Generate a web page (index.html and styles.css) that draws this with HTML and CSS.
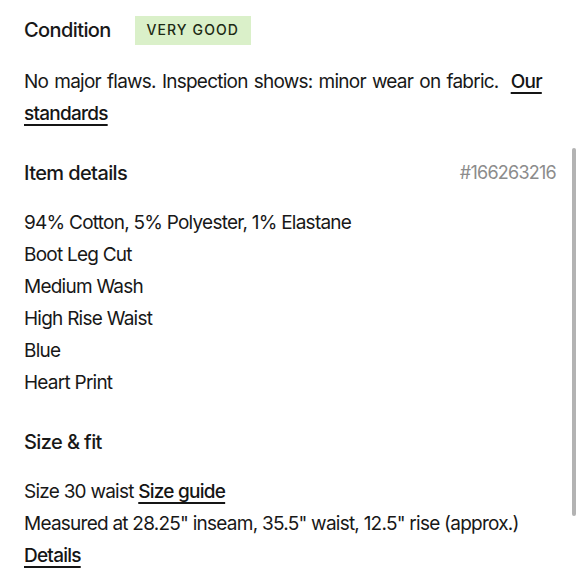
FILE: index.html
```html
<!DOCTYPE html>
<html>
<head>
<meta charset="utf-8">
<link rel="stylesheet" href="styles.css">
</head>
<body>
<main class="page">
  <section class="condition">
    <div class="condition-row">
      <h2 class="heading">Condition</h2>
      <span class="badge">VERY GOOD</span>
    </div>
    <p class="text">No major flaws. Inspection shows: minor wear on fabric.&nbsp; <a class="link" href="#">Our standards</a></p>
  </section>
  <section class="section">
    <div class="heading-row">
      <h2 class="heading">Item details</h2>
      <span class="item-id">#166263216</span>
    </div>
    <ul class="list">
      <li>94% Cotton, 5% Polyester, 1% Elastane</li>
      <li>Boot Leg Cut</li>
      <li>Medium Wash</li>
      <li>High Rise Waist</li>
      <li>Blue</li>
      <li>Heart Print</li>
    </ul>
  </section>
  <section class="section">
    <div class="heading-row">
      <h2 class="heading">Size &amp; fit</h2>
    </div>
    <div class="list">
      <div>Size 30 waist <a class="link" href="#">Size guide</a></div>
      <div>Measured at 28.25" inseam, 35.5" waist, 12.5" rise (approx.)</div>
      <div><a class="link" href="#">Details</a></div>
    </div>
  </section>
</main>
<div class="scrollbar"></div>
</body>
</html>
```
FILE: styles.css
```css
html, body {
  margin: 0;
  padding: 0;
  background: #fff;
}
body {
  font-family: Inter, "Noto Sans", sans-serif;
  color: #181818;
  font-size: 19px;
  line-height: 32px;
  letter-spacing: -0.04em;
  position: relative;
  width: 580px;
  height: 580px;
  overflow: hidden;
}
.page {
  padding: 15px 24px 0 24px;
}
.condition-row {
  display: flex;
  align-items: center;
  gap: 24px;
  height: 30px;
}
.heading {
  margin: 0;
  font-size: 20px;
  font-weight: 500;
  line-height: 32px;
  letter-spacing: -0.03em;
}
.badge {
  background: #daf0c9;
  height: 29px;
  width: 116px;
  box-sizing: border-box;
  justify-content: center;
  display: flex;
  align-items: center;
  font-size: 14px;
  font-weight: 500;
  letter-spacing: 0.08em;
  color: #1d2a14;
}
.text {
  margin: 21px 0 0 0;
  word-spacing: 1.5px;
}
.link {
  color: #151515;
  font-weight: 500;
  text-decoration: underline;
  text-decoration-thickness: 2px;
  text-underline-offset: 4px;
}
.section {
  margin-top: 27px;
}
.heading-row {
  display: flex;
  justify-content: space-between;
  align-items: center;
}
.item-id {
  color: #8c8c8c;
  font-size: 18px;
}
.list {
  list-style: none;
  margin: 18px 0 0 0;
  padding: 0;
}
.list li, .list div {
  line-height: 32px;
}
.scrollbar {
  position: absolute;
  left: 572px;
  top: 148px;
  width: 4px;
  height: 368px;
  border-radius: 2px;
  background: #b3b3b3;
}
```
